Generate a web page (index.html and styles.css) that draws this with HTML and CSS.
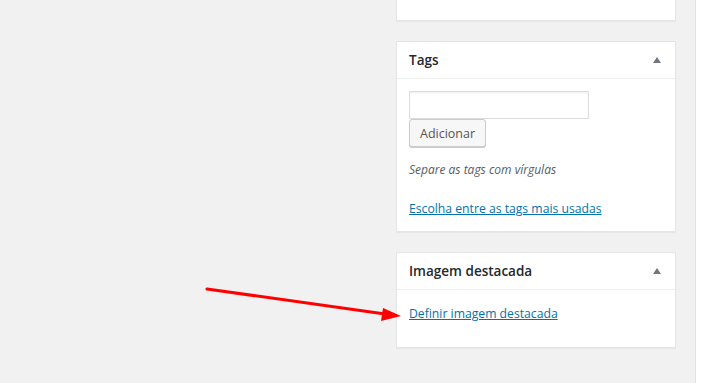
FILE: index.html
```html
<!DOCTYPE html>
<html>
<head>
<meta charset="utf-8">
<link rel="stylesheet" href="styles.css">
</head>
<body>
<div class="page">
  <div class="sidebar">
    <div class="box box-top"></div>
    <div class="box">
      <div class="box-head"><h2>Tags</h2><span class="toggle"></span></div>
      <div class="box-body tags-body">
        <div class="input"></div>
        <button class="btn">Adicionar</button>
        <p class="hint">Separe as tags com vírgulas</p>
        <a class="link" href="#">Escolha entre as tags mais usadas</a>
      </div>
    </div>
    <div class="box">
      <div class="box-head"><h2>Imagem destacada</h2><span class="toggle"></span></div>
      <div class="box-body img-body">
        <a class="link" href="#">Definir imagem destacada</a>
      </div>
    </div>
  </div>
  <div class="edge"></div>
</div>
<svg class="arrow" width="220" height="50" viewBox="0 0 220 50">
  <line x1="7" y1="9" x2="185" y2="34" stroke="#ff0000" stroke-width="3" stroke-linecap="round"/>
  <polygon points="201,36 183,28 181,41" fill="#ff0000"/>
</svg>
</body>
</html>
```
FILE: styles.css
```css
html, body { margin: 0; padding: 0; }
body {
  width: 701px; height: 383px; overflow: hidden;
  background: #f1f1f1;
  font-family: "Open Sans", "Noto Sans", sans-serif;
  color: #444;
  position: relative;
}
.page { display: flex; height: 383px; }
.sidebar {
  margin-left: 396px;
  width: 280px;
  display: flex; flex-direction: column; gap: 20px;
  margin-top: -20px;
}
.box {
  background: #fff;
  border: 1px solid #e5e5e5;
  box-shadow: 0 1px 1px rgba(0,0,0,0.04);
  box-sizing: border-box;
}
.box-top { height: 41px; }
.box-head {
  height: 36px;
  border-bottom: 1px solid #eee;
  display: flex; align-items: center; justify-content: space-between;
  padding: 0 12px;
}
.box-head h2 {
  margin: 0; font-size: 13.5px; font-weight: 600; color: #23282d;
}
.toggle {
  width: 0; height: 0;
  border-left: 4.5px solid transparent;
  border-right: 4.5px solid transparent;
  border-bottom: 6px solid #72777c;
  margin-right: 2px;
}
.box-body { padding: 13px 12px 0; }
.tags-body { height: 152px; box-sizing: border-box; padding-top: 12px; }
.input {
  width: 180px; height: 28px; box-sizing: border-box;
  border: 1px solid #ddd;
  box-shadow: inset 0 1px 2px rgba(0,0,0,0.07);
}
.btn {
  display: block;
  height: 28px; padding: 0 10px;
  font-family: inherit; font-size: 12.5px; color: #555;
  background: #f7f7f7; border: 1px solid #ccc; border-radius: 3px;
  box-shadow: 0 1px 0 #ccc;
}
.hint { margin: 14px 0 0; font-size: 12px; font-style: italic; color: #555d66; }
.link { display: inline-block; margin-top: 22px; font-size: 12.2px; color: #0073aa; text-decoration: underline; }
.img-body { height: 57px; box-sizing: border-box; padding-top: 1px; }
.img-body .link { margin-top: 14px; }
.edge {
  margin-left: 19px;
  width: 1px; background: #dde3ea;
  border-right: 5px solid #fff;
}
.arrow { position: absolute; left: 200px; top: 280px; }
```
